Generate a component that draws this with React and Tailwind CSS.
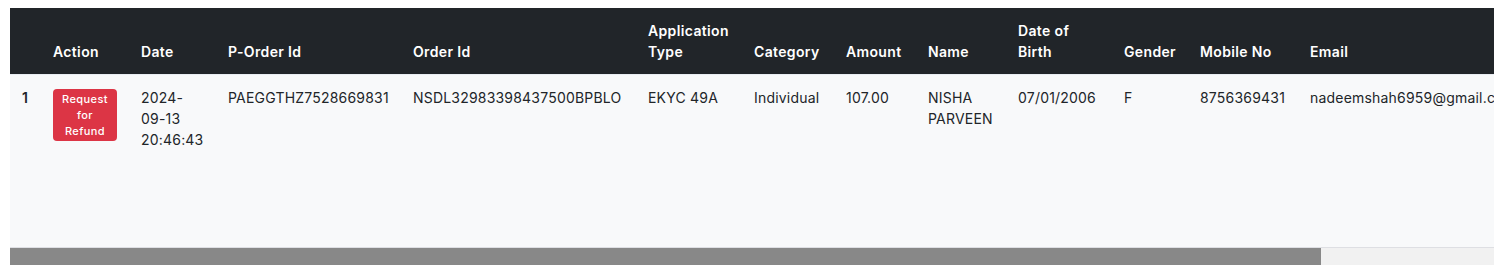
const columns = [
  { key: "idx", label: "", w: "w-[31px]" },
  { key: "action", label: "Action", w: "w-[88px]" },
  { key: "date", label: "Date", w: "w-[87px]" },
  { key: "porder", label: "P-Order Id", w: "w-[185px]" },
  { key: "order", label: "Order Id", w: "w-[235px]" },
  { key: "type", label: "Application Type", w: "w-[106px]" },
  { key: "category", label: "Category", w: "w-[92px]" },
  { key: "amount", label: "Amount", w: "w-[82px]" },
  { key: "name", label: "Name", w: "w-[90px]" },
  { key: "dob", label: "Date of Birth", w: "w-[106px]" },
  { key: "gender", label: "Gender", w: "w-[76px]" },
  { key: "mobile", label: "Mobile No", w: "w-[110px]" },
  { key: "email", label: "Email", w: "w-[392px]" },
];

const rows = [
  {
    date: "2024-09-13 20:46:43",
    porder: "PAEGGTHZ7528669831",
    order: "NSDL32983398437500BPBLO",
    type: "EKYC 49A",
    category: "Individual",
    amount: "107.00",
    name: "NISHA PARVEEN",
    dob: "07/01/2006",
    gender: "F",
    mobile: "8756369431",
    email: "nadeemshah6959@gmail.com",
  },
];

export default function App() {
  return (
    <div className="bg-white pl-[10px] pt-2 pb-3 font-['Inter',sans-serif] text-[14px] leading-[21px] tracking-[0.2px] text-[#212529]">
      <div className="h-[239px] overflow-hidden bg-[#f8f9fa]">
        <table className="w-[1680px] table-fixed border-collapse text-left">
          <colgroup>
            {columns.map((c) => (
              <col key={c.key} className={c.w} />
            ))}
          </colgroup>
          <thead>
            <tr className="bg-[#212529] text-white">
              {columns.map((c) => (
                <th
                  key={c.key}
                  className="h-[66px] px-3 py-3 align-bottom font-semibold tracking-[0.35px]"
                >
                  {c.label}
                </th>
              ))}
            </tr>
          </thead>
          <tbody>
            {rows.map((r, i) => (
              <tr key={i} className="border-t border-[#e9edf2] align-top">
                <th className="px-3 py-3 font-semibold">{i + 1}</th>
                <td className="px-3 pt-[14px] pb-3">
                  <button className="w-[64px] rounded-[4px] bg-[#dc3545] px-1 py-[2px] text-[11px] font-medium leading-[16px] tracking-[0.4px] text-white">
                    Request for Refund
                  </button>
                </td>
                <td className="px-3 py-3">{r.date}</td>
                <td className="px-3 py-3">{r.porder}</td>
                <td className="px-3 py-3">{r.order}</td>
                <td className="px-3 py-3">{r.type}</td>
                <td className="px-3 py-3">{r.category}</td>
                <td className="px-3 py-3">{r.amount}</td>
                <td className="px-3 py-3">{r.name}</td>
                <td className="px-3 py-3">{r.dob}</td>
                <td className="px-3 py-3">{r.gender}</td>
                <td className="px-3 py-3">{r.mobile}</td>
                <td className="px-3 py-3">{r.email}</td>
              </tr>
            ))}
          </tbody>
        </table>
      </div>
      <div className="flex h-[18px] border-t border-[#dedfe3] bg-[#f1f1f1]">
        <div className="w-[1311px] bg-[#888888]" />
      </div>
    </div>
  );
}
